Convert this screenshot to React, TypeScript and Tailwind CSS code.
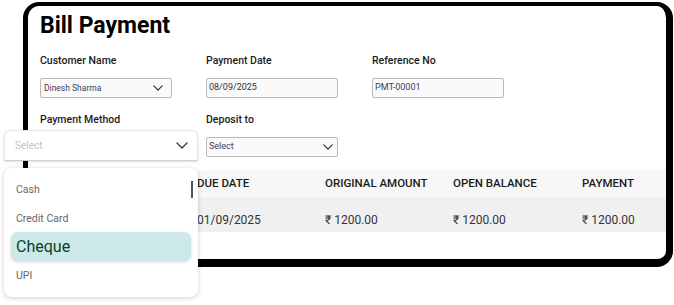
import React from "react";

const Chevron = ({ className = "" }: { className?: string }) => (
  <svg viewBox="0 0 12 7" className={className} fill="none" stroke="currentColor" strokeWidth="1.3" strokeLinecap="round" strokeLinejoin="round">
    <path d="M1 1l5 5 5-5" />
  </svg>
);

export default function App() {
  return (
    <div className="relative w-[674px] h-[305px] bg-white overflow-hidden" style={{ fontFamily: "Roboto, 'Liberation Sans', sans-serif" }}>
      <div className="ml-[23px] mt-[2px] w-[650px] h-[265px] rounded-[16px] border-black border-l-[5px] border-t-[4px] border-r-[7px] border-b-[8px] bg-white overflow-hidden">
        <div className="pl-[12px] pt-[6px]">
          <h1 className="text-[23px] leading-[28px] font-bold text-black">Bill Payment</h1>
          <div className="mt-[14px] grid grid-cols-[166px_166px_166px]">
            <div>
              <div className="text-[10.5px] leading-[14px] font-medium text-[#1a1a1a]">Customer Name</div>
              <div className="mt-[10px] w-[132px] h-[20px] border border-[#b8b8b8] rounded-[2px] bg-[#fafafa] flex items-center justify-between pl-[3px] pr-[8px]">
                <span className="text-[8.5px] text-[#3d3d5c]">Dinesh Sharma</span>
                <Chevron className="w-[10px] h-[6px] text-[#222]" />
              </div>
            </div>
            <div>
              <div className="text-[10.5px] leading-[14px] font-medium text-[#1a1a1a]">Payment Date</div>
              <div className="mt-[10px] w-[132px] h-[20px] border border-[#b8b8b8] rounded-[2px] bg-[#fafafa] flex items-center pl-[2px]">
                <span className="text-[9px] text-[#333]">08/09/2025</span>
              </div>
            </div>
            <div>
              <div className="text-[10.5px] leading-[14px] font-medium text-[#1a1a1a]">Reference No</div>
              <div className="mt-[10px] w-[132px] h-[20px] border border-[#b8b8b8] rounded-[2px] bg-[#fafafa] flex items-center pl-[2px]">
                <span className="text-[9px] text-[#3d3d5c]">PMT-00001</span>
              </div>
            </div>
            <div className="mt-[15px]">
              <div className="text-[10.5px] leading-[14px] font-medium text-[#1a1a1a]">Payment Method</div>
            </div>
            <div className="mt-[15px]">
              <div className="text-[10.5px] leading-[14px] font-medium text-[#1a1a1a]">Deposit to</div>
              <div className="mt-[10px] w-[132px] h-[20px] border border-[#b8b8b8] rounded-[2px] bg-[#fafafa] flex items-center justify-between pl-[2px] pr-[4px]">
                <span className="text-[9px] text-[#3d3d5c]">Select</span>
                <Chevron className="w-[10px] h-[6px] text-[#222]" />
              </div>
            </div>
          </div>
        </div>
        <div className="mt-[13px]">
          <div className="grid grid-cols-[169px_128px_128px_129px_1fr] h-[29px] items-center bg-[#f7f7f7] border-b border-[#ececec] text-[11.5px] font-medium text-[#1a1a1a]">
            <div />
            <div>DUE DATE</div>
            <div>ORIGINAL AMOUNT</div>
            <div>OPEN BALANCE</div>
            <div>PAYMENT</div>
          </div>
          <div className="grid grid-cols-[169px_128px_128px_129px_1fr] h-[33px] pt-[8px] items-center bg-[#f0f0f0] text-[12px] text-[#333]">
            <div />
            <div>01/09/2025</div>
            <div>₹ 1200.00</div>
            <div>₹ 1200.00</div>
            <div>₹ 1200.00</div>
          </div>
        </div>
      </div>

      {/* Payment method dropdown overlay */}
      <div className="absolute left-[4px] top-[130px] w-[194px] h-[31px] bg-white rounded-t-[6px] border border-[#e6e6e6] border-b-[#cfcfcf] shadow-[0_1px_3px_rgba(0,0,0,0.12)] flex items-center justify-between pl-[10px] pr-[9px]">
        <span className="text-[10px] text-[#c4c4c4]">Select</span>
        <Chevron className="w-[12px] h-[7px] text-[#333]" />
      </div>
      <div className="absolute left-[4px] top-[168px] w-[194px] h-[129px] bg-white rounded-[8px] shadow-[0_1px_5px_rgba(0,0,0,0.2)] flex flex-col px-[7px]">
        <div className="h-[15px]" />
        <div className="h-[14px] flex items-center pl-[5px] text-[10.5px] text-[#666]">Cash</div>
        <div className="h-[15px]" />
        <div className="h-[14px] flex items-center pl-[5px] text-[10.5px] text-[#666]">Credit Card</div>
        <div className="h-[6px]" />
        <div className="h-[29px] flex items-center pl-[5px] rounded-[7px] bg-[#cde9e7] shadow-[0_1px_3px_rgba(0,0,0,0.18)] text-[16px] text-[#083d2f]">Cheque</div>
        <div className="h-[8px]" />
        <div className="h-[14px] flex items-center pl-[5px] text-[10.5px] text-[#666]">UPI</div>
        <div className="absolute left-[187px] top-[13px] w-[2px] h-[17px] bg-[#555]" />
      </div>
    </div>
  );
}
